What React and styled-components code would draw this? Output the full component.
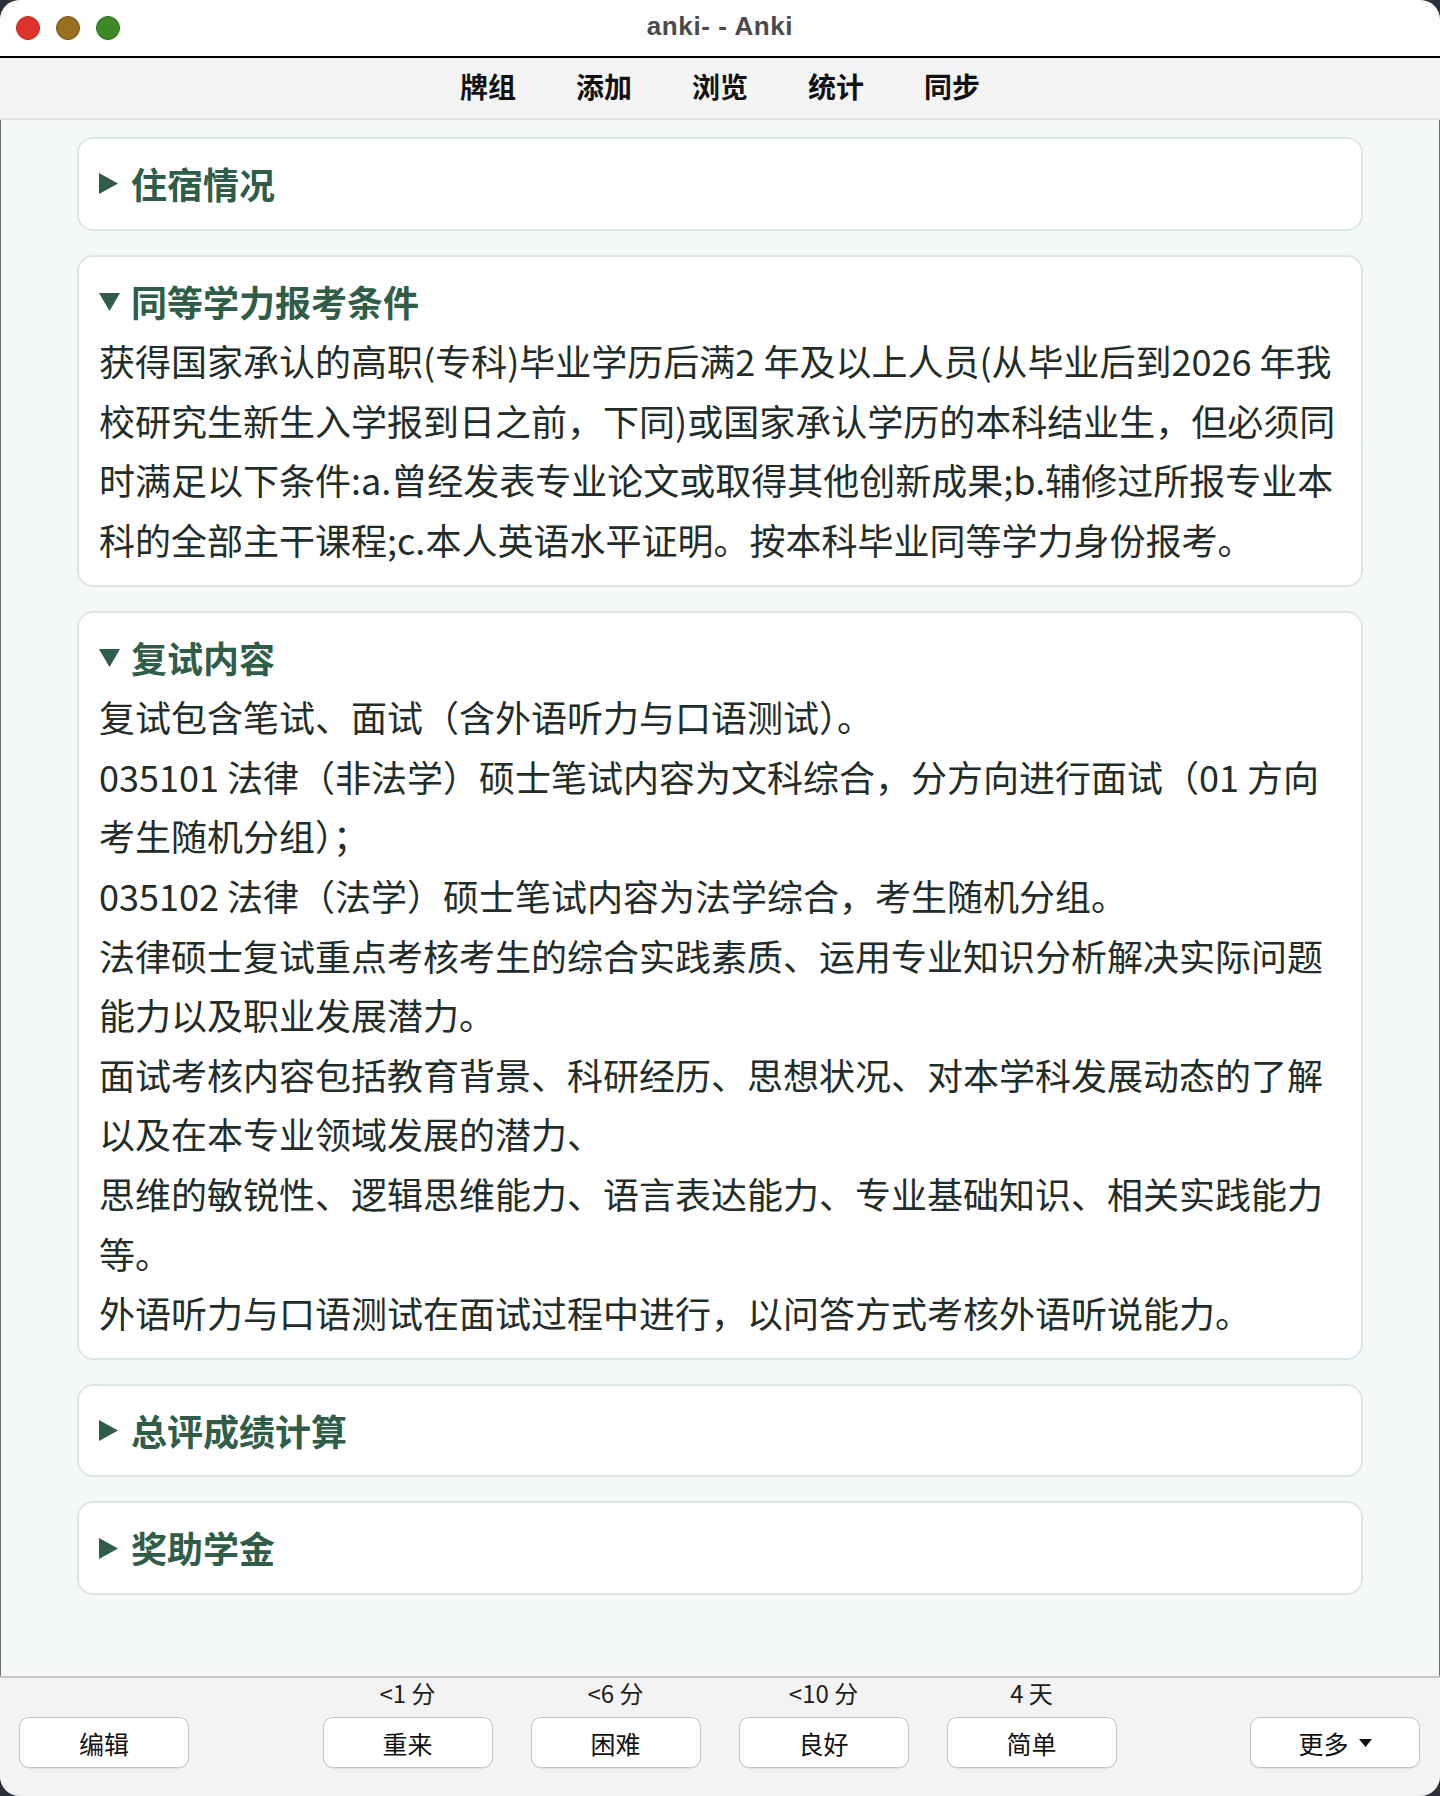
import React from "react"
import styled, { createGlobalStyle } from "styled-components"

const GlobalStyle = createGlobalStyle`
  html, body {
    margin: 0;
    padding: 0;
    background: #2a3139;
  }
  * {
    box-sizing: border-box;
  }
`

const UI_FONT = `"Noto Sans CJK SC", "Noto Sans", sans-serif`

const Window = styled.div`
  width: 1440px;
  height: 1796px;
  display: flex;
  flex-direction: column;
  border-radius: 20px;
  overflow: hidden;
  background: #f4f9f6;
  box-shadow: inset 0 0 0 1px rgba(0, 0, 0, 0.55);
  font-family: ${UI_FONT};
`

const TitleBar = styled.div`
  position: relative;
  height: 58px;
  flex-shrink: 0;
  display: flex;
  align-items: center;
  justify-content: center;
  background: #fdfdfd;
  border-bottom: 2px solid #000;
`

const Lights = styled.div`
  position: absolute;
  left: 16px;
  top: 16px;
  display: flex;
  gap: 16px;
`

const Light = styled.span`
  width: 24px;
  height: 24px;
  border-radius: 50%;
  background: ${(p) => p.$fill};
  border: 1px solid ${(p) => p.$edge};
`

const WindowTitle = styled.div`
  font-family: "Liberation Sans", Arial, sans-serif;
  font-weight: 700;
  font-size: 26px;
  letter-spacing: 0.6px;
  color: #4a4a4a;
  margin-top: -3px;
`

const Toolbar = styled.nav`
  height: 62px;
  flex-shrink: 0;
  display: flex;
  justify-content: center;
  align-items: center;
  gap: 60px;
  padding-bottom: 4px;
  background: #f4f4f4;
  border-bottom: 2px solid #e1e1e1;
`

const ToolLink = styled.span`
  font-size: 28px;
  font-weight: 700;
  color: #111;
  line-height: 1;
`

const Content = styled.main`
  flex: 1;
  display: flex;
  flex-direction: column;
  gap: 24px;
  padding: 17px 77px 0;
`

const Card = styled.section`
  background: #fff;
  border: 2px solid #dbe8e0;
  border-radius: 16px;
  padding: 15px 20px;
  font-size: 36px;
  line-height: 59.6px;
  color: #232d28;
`

const Summary = styled.div`
  display: flex;
  align-items: center;
  font-weight: 700;
  color: #2f5d47;
`

const Marker = styled.span`
  width: 32px;
  display: inline-flex;
  align-items: center;
  svg {
    display: block;
  }
`

const Para = styled.div``

const BottomBar = styled.footer`
  height: 120px;
  flex-shrink: 0;
  display: grid;
  grid-template-columns: 1fr auto 1fr;
  align-items: end;
  padding: 0 20px 28px 19px;
  background: #f3f3f3;
  border-top: 2px solid #c9c9c9;
`

const Answers = styled.div`
  display: grid;
  grid-template-columns: repeat(4, 170px);
  column-gap: 38px;
`

const Answer = styled.div`
  display: flex;
  flex-direction: column;
  align-items: center;
  gap: 9px;
`

const Due = styled.span`
  font-size: 24px;
  line-height: 30px;
  color: #1c1c1c;
`

const Button = styled.button`
  width: 170px;
  height: 51px;
  display: flex;
  align-items: center;
  justify-content: center;
  gap: 10px;
  background: #fff;
  border: 1.5px solid #c3c3c3;
  border-radius: 10px;
  box-shadow: 0 1px 1px rgba(0, 0, 0, 0.08);
  font-family: ${UI_FONT};
  font-size: 25px;
  color: #111;
  padding: 0;
`

const Side = styled.div`
  display: flex;
  justify-content: ${(p) => (p.$end ? "flex-end" : "flex-start")};
`

const Triangle = ({ open }) => (
  <Marker>
    {open ? (
      <svg width="21" height="19" viewBox="0 0 21 19">
        <polygon points="0,1 21,1 10.5,19" fill="#2f5d47" />
      </svg>
    ) : (
      <svg width="19" height="21" viewBox="0 0 19 21">
        <polygon points="0,0 19,10.5 0,21" fill="#2f5d47" />
      </svg>
    )}
  </Marker>
)

const Section = ({ title, open, children }) => (
  <Card>
    <Summary>
      <Triangle open={open} />
      {title}
    </Summary>
    {open && children}
  </Card>
)

const answers = [
  { due: "<1 分", label: "重来" },
  { due: "<6 分", label: "困难" },
  { due: "<10 分", label: "良好" },
  { due: "4 天", label: "简单" },
]

const App = () => (
  <>
    <GlobalStyle />
    <Window>
      <TitleBar>
        <Lights>
          <Light $fill="#e0322a" $edge="#c1281f" />
          <Light $fill="#98701f" $edge="#77561a" />
          <Light $fill="#3c8a26" $edge="#2d6c1c" />
        </Lights>
        <WindowTitle>anki- - Anki</WindowTitle>
      </TitleBar>

      <Toolbar>
        <ToolLink>牌组</ToolLink>
        <ToolLink>添加</ToolLink>
        <ToolLink>浏览</ToolLink>
        <ToolLink>统计</ToolLink>
        <ToolLink>同步</ToolLink>
      </Toolbar>

      <Content>
        <Section title="住宿情况" />
        <Section title="同等学力报考条件" open>
          <Para>
            获得国家承认的高职(专科)毕业学历后满2 年及以上人员(从毕业后到2026 年我校研究生新生入学报到日之前，下同)或国家承认学历的本科结业生，但必须同时满足以下条件:a.曾经发表专业论文或取得其他创新成果;b.辅修过所报专业本科的全部主干课程;c.本人英语水平证明。按本科毕业同等学力身份报考。
          </Para>
        </Section>
        <Section title="复试内容" open>
          <Para>复试包含笔试、面试（含外语听力与口语测试）。</Para>
          <Para>035101 法律（非法学）硕士笔试内容为文科综合，分方向进行面试（01 方向考生随机分组）；</Para>
          <Para>035102 法律（法学）硕士笔试内容为法学综合，考生随机分组。</Para>
          <Para>法律硕士复试重点考核考生的综合实践素质、运用专业知识分析解决实际问题能力以及职业发展潜力。</Para>
          <Para>面试考核内容包括教育背景、科研经历、思想状况、对本学科发展动态的了解以及在本专业领域发展的潜力、</Para>
          <Para>思维的敏锐性、逻辑思维能力、语言表达能力、专业基础知识、相关实践能力等。</Para>
          <Para>外语听力与口语测试在面试过程中进行，以问答方式考核外语听说能力。</Para>
        </Section>
        <Section title="总评成绩计算" />
        <Section title="奖助学金" />
      </Content>

      <BottomBar>
        <Side>
          <Button>编辑</Button>
        </Side>
        <Answers>
          {answers.map((a) => (
            <Answer key={a.label}>
              <Due>{a.due}</Due>
              <Button>{a.label}</Button>
            </Answer>
          ))}
        </Answers>
        <Side $end>
          <Button>
            更多
            <svg width="13" height="8" viewBox="0 0 13 8">
              <polygon points="0,0 13,0 6.5,8" fill="#111" />
            </svg>
          </Button>
        </Side>
      </BottomBar>
    </Window>
  </>
)

export default App
